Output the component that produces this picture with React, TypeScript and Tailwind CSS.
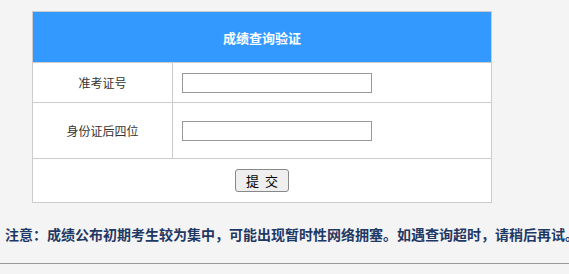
const font = { fontFamily: '"Microsoft YaHei", "Noto Sans CJK SC", sans-serif' };

export default function App() {
  return (
    <div className="w-[569px] h-[274px] bg-[#f4f4f4] overflow-hidden" style={font}>
      <div className="pt-[11px] pl-[32px]">
        <table className="w-[460px] border-collapse bg-white text-[12px] text-[#333]">
          <tbody>
            <tr>
              <th
                colSpan={2}
                className="h-[51px] bg-[#3399ff] text-white text-[13px] font-bold border border-[#cccccc] pt-[2px]"
              >
                成绩查询验证
              </th>
            </tr>
            <tr>
              <td className="w-[140px] h-[40px] text-center border border-[#cccccc]">准考证号</td>
              <td className="border border-[#cccccc] pl-[9px]">
                <input className="block w-[190px] h-[20px] border border-[#999] bg-white outline-none" />
              </td>
            </tr>
            <tr>
              <td className="h-[56px] text-center border border-[#cccccc]">身份证后四位</td>
              <td className="border border-[#cccccc] pl-[9px]">
                <input className="block w-[190px] h-[20px] border border-[#999] bg-white outline-none" />
              </td>
            </tr>
            <tr>
              <td colSpan={2} className="h-[44px] text-center border border-[#cccccc]">
                <button className="w-[54px] h-[23px] bg-[#efefef] border border-[#888] rounded-[3px] text-[13px] text-black leading-none">
                  提&nbsp;&nbsp;交
                </button>
              </td>
            </tr>
          </tbody>
        </table>
      </div>
      <p className="mt-[22px] pl-[5px] whitespace-nowrap text-[14px] font-bold text-[#1f3864] leading-[18px]">
        注意：成绩公布初期考生较为集中，可能出现暂时性网络拥塞。如遇查询超时，请稍后再试。
      </p>
      <div className="mt-[20px] border-t border-[#999]" />
    </div>
  );
}
